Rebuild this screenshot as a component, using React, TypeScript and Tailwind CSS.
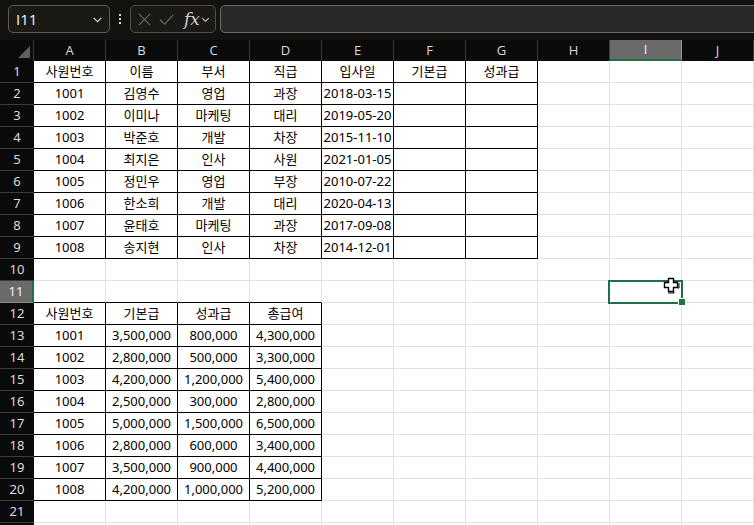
import React from "react";

const COLS = ["A", "B", "C", "D", "E", "F", "G", "H", "I", "J"];

const t1: string[][] = [
  ["사원번호", "이름", "부서", "직급", "입사일", "기본급", "성과급"],
  ["1001", "김영수", "영업", "과장", "2018-03-15", "", ""],
  ["1002", "이미나", "마케팅", "대리", "2019-05-20", "", ""],
  ["1003", "박준호", "개발", "차장", "2015-11-10", "", ""],
  ["1004", "최지은", "인사", "사원", "2021-01-05", "", ""],
  ["1005", "정민우", "영업", "부장", "2010-07-22", "", ""],
  ["1006", "한소희", "개발", "대리", "2020-04-13", "", ""],
  ["1007", "윤태호", "마케팅", "과장", "2017-09-08", "", ""],
  ["1008", "송지현", "인사", "차장", "2014-12-01", "", ""],
];

const t2: string[][] = [
  ["사원번호", "기본급", "성과급", "총급여"],
  ["1001", "3,500,000", "800,000", "4,300,000"],
  ["1002", "2,800,000", "500,000", "3,300,000"],
  ["1003", "4,200,000", "1,200,000", "5,400,000"],
  ["1004", "2,500,000", "300,000", "2,800,000"],
  ["1005", "5,000,000", "1,500,000", "6,500,000"],
  ["1006", "2,800,000", "600,000", "3,400,000"],
  ["1007", "3,500,000", "900,000", "4,400,000"],
  ["1008", "4,200,000", "1,000,000", "5,200,000"],
];

// r is the 1-based sheet row, c the 0-based column
function inTable(r: number, c: number) {
  if (r >= 1 && r <= 9 && c <= 6) return true;
  if (r >= 12 && r <= 20 && c <= 3) return true;
  return false;
}

function cellText(r: number, c: number) {
  if (r >= 1 && r <= 9 && c <= 6) return t1[r - 1][c];
  if (r >= 12 && r <= 20 && c <= 3) return t2[r - 12][c];
  return "";
}

function Cell({ r, c }: { r: number; c: number }) {
  const blackRight = inTable(r, c) || inTable(r, c + 1);
  const blackBottom = inTable(r, c) || inTable(r + 1, c);
  return (
    <div
      className={
        "box-border h-[22px] w-[72px] shrink-0 border-r border-b flex items-center justify-center text-[13px] text-black whitespace-nowrap overflow-hidden " +
        (blackRight ? "border-r-black " : "border-r-[#e1e1e1] ") +
        (blackBottom ? "border-b-black" : "border-b-[#e1e1e1]")
      }
    >
      {cellText(r, c)}
    </div>
  );
}

function Chevron({ className }: { className?: string }) {
  return (
    <svg viewBox="0 0 12 12" className={className} fill="none" stroke="currentColor" strokeWidth="1.2">
      <path d="M2.5 4.5 6 8l3.5-3.5" />
    </svg>
  );
}

function TopBar() {
  return (
    <div className="h-[40px] bg-[#13120f] flex items-start pt-[5px] pl-[8px]">
      <div className="box-border h-[28px] w-[102px] rounded-[5px] border border-[#5c5b58] bg-[#1a1916] flex items-center pl-[7px] pr-[5px]">
        <span className="text-[15px] text-[#f0f0f0] flex-1" style={{ fontFamily: "'Open Sans', sans-serif" }}>
          I11
        </span>
        <Chevron className="w-[13px] h-[13px] text-[#cfcfcf]" />
      </div>
      <div className="w-[20px] h-[28px] flex flex-col items-center justify-center gap-[2px]">
        <span className="block w-[2px] h-[2px] bg-[#d8d8d8]" />
        <span className="block w-[2px] h-[2px] bg-[#d8d8d8]" />
        <span className="block w-[2px] h-[2px] bg-[#d8d8d8]" />
      </div>
      <div className="box-border h-[28px] w-[86px] rounded-[5px] border border-[#4f4e4b] bg-[#1a1916] flex items-center pl-[6px] gap-[6px]">
        <svg viewBox="0 0 16 16" className="w-[15px] h-[15px]" fill="none" stroke="#6a6966" strokeWidth="1.2">
          <path d="M2 2l12 12M14 2 2 14" />
        </svg>
        <svg viewBox="0 0 16 16" className="w-[17px] h-[15px]" fill="none" stroke="#6a6966" strokeWidth="1.2">
          <path d="M1 8l5 5L15 3" />
        </svg>
        <span className="ml-[3px] text-[17px] italic text-[#d0d0d0] leading-none" style={{ fontFamily: "'DejaVu Serif', serif" }}>
          fx
        </span>
        <Chevron className="w-[11px] h-[11px] -ml-[6px] text-[#cfcfcf]" />
      </div>
      <div className="box-border ml-[4px] h-[28px] flex-1 -mr-[8px] rounded-l-[5px] border border-[#6a6a6a] bg-[#292929]" />
    </div>
  );
}

function HeaderRow() {
  return (
    <div className="flex h-[21px] bg-[#0a0a0a]" style={{ fontFamily: "'Open Sans', sans-serif" }}>
      <div className="relative w-[34px] h-[21px] shrink-0 border-r border-[#3c3c3c] box-border">
        <svg viewBox="0 0 12 12" className="absolute right-[3px] bottom-[3px] w-[12px] h-[12px]">
          <path d="M12 0V12H0Z" fill="#5f5f5f" />
        </svg>
      </div>
      {COLS.map((c) =>
        c === "I" ? (
          <div
            key={c}
            className="box-border w-[72px] h-[21px] shrink-0 bg-[#6a6a6a] border-r border-r-[#9a9a9a] border-b-2 border-b-[#1e7145] flex items-center justify-center text-[13px] text-[#f2f2f2]"
          >
            {c}
          </div>
        ) : (
          <div
            key={c}
            className="box-border w-[72px] h-[21px] shrink-0 border-r border-[#3c3c3c] flex items-center justify-center text-[13px] text-[#dcdcdc]"
          >
            {c}
          </div>
        )
      )}
    </div>
  );
}

function Row({ r }: { r: number }) {
  const sel = r === 11;
  return (
    <div className="flex h-[22px]">
      <div
        className={
          "box-border w-[34px] h-[22px] shrink-0 border-b flex items-center justify-center text-[13px] " +
          (sel
            ? "bg-[#6a6a6a] border-b-[#8a8a8a] border-r-2 border-r-[#1e7145] text-[#f2f2f2]"
            : "bg-[#0a0a0a] border-b-[#3c3c3c] text-[#dcdcdc]")
        }
      >
        {r <= 21 ? r : ""}
      </div>
      {COLS.map((_, c) => (
        <Cell key={c} r={r} c={c} />
      ))}
    </div>
  );
}

export default function App() {
  const rows = Array.from({ length: 22 }, (_, i) => i + 1);
  return (
    <div
      className="relative w-[754px] h-[525px] overflow-hidden bg-white"
      style={{ fontFamily: "'Noto Sans', 'Noto Sans CJK KR', sans-serif" }}
    >
      <TopBar />
      <HeaderRow />
      {rows.map((r) => (
        <Row key={r} r={r} />
      ))}
      {/* active cell I11 */}
      <div className="absolute left-[608px] top-[280px] w-[75px] h-[24px] border-2 border-[#1e7145] box-border" />
      <div className="absolute left-[678px] top-[298px] w-[6px] h-[6px] bg-[#1e7145] border border-white box-content" />
      {/* mouse cursor */}
      <svg viewBox="0 0 17 17" className="absolute left-[663px] top-[277px] w-[17px] h-[17px]">
        <path d="M5.5 1.5h5v4h4v5h-4v4h-5v-4h-4v-5h4z" fill="#fff" stroke="#000" strokeWidth="1.4" />
        <path d="M11 15v1h-6M15 11h1v-5" fill="none" stroke="#000" strokeWidth="1" />
      </svg>
    </div>
  );
}
